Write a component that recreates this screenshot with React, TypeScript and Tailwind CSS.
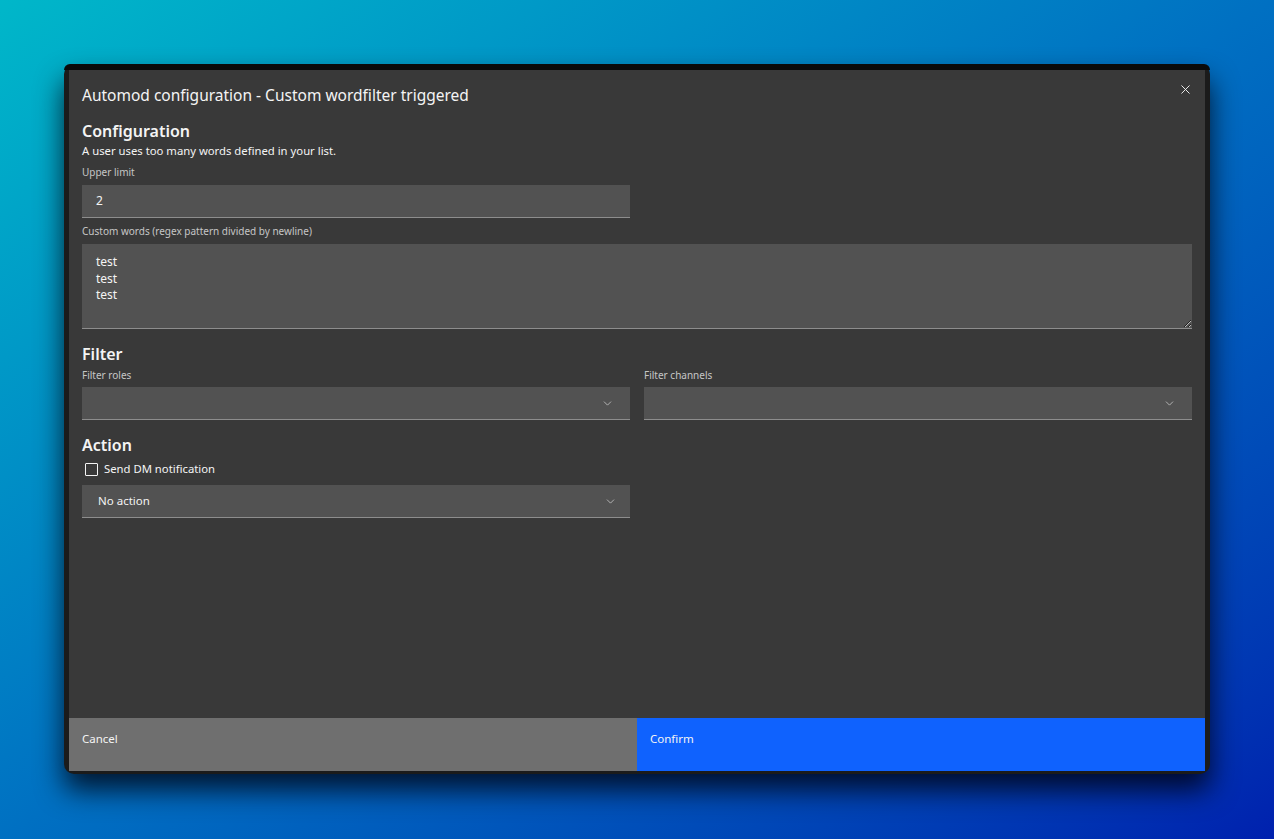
import { X, ChevronDown } from 'lucide-react';

const LABEL = 'text-[10px] leading-[14px] text-[#c6c6c6]';
const HEADING = 'text-[16px] font-semibold leading-[20px] text-[#f4f4f4]';
const FIELD = 'h-[33px] border-b border-[#8d8d8d] bg-[#525252]';

function Select({ value, chevronRight = 'pr-[16px]' }: { value?: string; chevronRight?: string }) {
  return (
    <div className={`${FIELD} flex items-center justify-between pl-[16px] ${chevronRight}`}>
      <span className="text-[11.5px] text-[#f4f4f4]">{value}</span>
      <ChevronDown size={13} strokeWidth={1.5} className="text-[#c6c6c6]" />
    </div>
  );
}

export default function App() {
  return (
    <div
      className="h-[839px] w-[1274px] overflow-hidden bg-linear-to-br from-[#00b7c9] via-[#0070c2] to-[#0020ae] pl-[64px] pt-[64px]"
      style={{ fontFamily: '"Noto Sans", "Open Sans", sans-serif' }}
    >
      {/* app window */}
      <div className="flex h-[710px] w-[1146px] flex-col rounded-[10px] bg-[#1b1b1b] px-[5px] pb-[3px] shadow-[0_16px_28px_rgba(0,0,12,0.8)]">
        <div className="-mx-[5px] h-[6px] shrink-0 rounded-t-[10px] bg-[#0a0a0a]" />

        {/* modal */}
        <div className="flex flex-1 flex-col bg-[#393939]">
          <div className="flex-1 px-[13px]">
            <div className="flex items-start justify-between pt-[15px]">
              <h2 className="text-[15.5px] leading-[20px] text-[#f4f4f4]">
                Automod configuration - Custom wordfilter triggered
              </h2>
              <X size={15} strokeWidth={1.5} className="mt-[-3px] mr-[-1px] text-[#f4f4f4]" />
            </div>

            <h3 className={`${HEADING} mt-[16px]`}>Configuration</h3>
            <p className="mt-[2px] text-[11.3px] leading-[16px] text-[#f4f4f4]">
              A user uses too many words defined in your list.
            </p>

            <div className={`${LABEL} mt-[6px]`}>Upper limit</div>
            <div className={`${FIELD} mt-[6px] flex w-[548px] items-center pl-[14px] text-[12px] text-[#f4f4f4]`}>
              2
            </div>

            <div className={`${LABEL} mt-[6px]`}>Custom words (regex pattern divided by newline)</div>
            <textarea
              readOnly
              defaultValue={'test\ntest\ntest'}
              className="mt-[6px] block h-[85px] w-full resize border-b border-[#8d8d8d] bg-[#525252] px-[14px] pt-[10px] text-[12px] leading-[16.5px] text-[#f4f4f4] outline-none"
            />

            <h3 className={`${HEADING} mt-[15px]`}>Filter</h3>
            <div className="mt-[4px] grid grid-cols-2 gap-x-[14px]">
              <div>
                <div className={LABEL}>Filter roles</div>
                <div className="mt-[5px]">
                  <Select chevronRight="pr-[16px]" />
                </div>
              </div>
              <div>
                <div className={LABEL}>Filter channels</div>
                <div className="mt-[5px]">
                  <Select chevronRight="pr-[16px]" />
                </div>
              </div>
            </div>

            <h3 className={`${HEADING} mt-[15px]`}>Action</h3>
            <label className="mt-[6px] flex items-center gap-[6px] pl-[3px]">
              <span className="h-[13px] w-[13px] rounded-[1px] border border-[#f4f4f4]" />
              <span className="text-[11.3px] leading-[16px] text-[#f4f4f4]">Send DM notification</span>
            </label>
            <div className="mt-[8px] w-[548px]">
              <Select value="No action" chevronRight="pr-[13px]" />
            </div>
          </div>

          {/* footer */}
          <div className="grid h-[53px] shrink-0 grid-cols-2">
            <div className="bg-[#6f6f6f] pl-[13px] pt-[13px] text-[11.5px] leading-[16px] text-[#f4f4f4]">Cancel</div>
            <div className="bg-[#0f62fe] pl-[13px] pt-[13px] text-[11.5px] leading-[16px] text-[#f4f4f4]">Confirm</div>
          </div>
        </div>
      </div>
    </div>
  );
}
